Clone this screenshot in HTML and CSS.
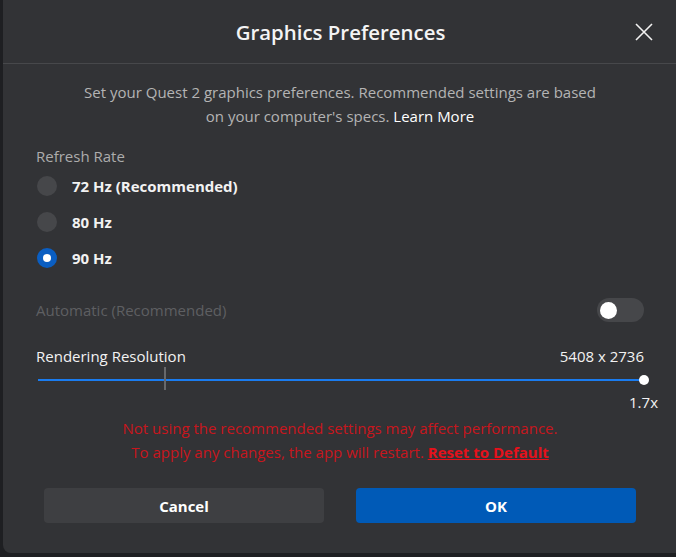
FILE: index.html
```html
<!DOCTYPE html>
<html>
<head>
<meta charset="utf-8">
<link rel="stylesheet" href="styles.css">
</head>
<body>
<div class="dialog">
  <div class="header">
    <div></div>
    <div class="title">Graphics Preferences</div>
    <div class="close">
      <svg width="18" height="18" viewBox="0 0 18 18"><path d="M1 1 L17 17 M17 1 L1 17" stroke="#f2f2f2" stroke-width="1.6" fill="none"/></svg>
    </div>
  </div>
  <div class="content">
    <p class="desc">Set your Quest 2 graphics preferences. Recommended settings are based<br>on your computer's specs. <span class="link">Learn More</span></p>
    <div class="section-label">Refresh Rate</div>
    <div class="radios">
      <div class="radio-row"><span class="radio"></span><span class="radio-label">72 Hz (Recommended)</span></div>
      <div class="radio-row"><span class="radio"></span><span class="radio-label">80 Hz</span></div>
      <div class="radio-row"><span class="radio checked"><span class="dot"></span></span><span class="radio-label">90 Hz</span></div>
    </div>
    <div class="auto-row">
      <span class="auto-label">Automatic (Recommended)</span>
      <span class="toggle"><span class="knob"></span></span>
    </div>
    <div class="res-row">
      <span>Rendering Resolution</span>
      <span>5408 x 2736</span>
    </div>
    <div class="slider">
      <div class="track"></div>
      <div class="tick"></div>
      <div class="thumb"></div>
    </div>
    <div class="scale">1.7x</div>
    <p class="warn">Not using the recommended settings may affect performance.<br>To apply any changes, the app will restart. <a class="reset">Reset to Default</a></p>
    <div class="buttons">
      <button class="btn cancel">Cancel</button>
      <button class="btn ok">OK</button>
    </div>
  </div>
</div>
</body>
</html>
```
FILE: styles.css
```css
html, body {
  margin: 0;
  padding: 0;
  background: #1e1f22;
  width: 676px;
  height: 557px;
  overflow: hidden;
  font-family: "Open Sans", "Noto Sans", sans-serif;
}
.dialog {
  margin-left: 3px;
  width: 673px;
  height: 553px;
  background: #323336;
  border-bottom-left-radius: 8px;
  color: #fff;
}
.header {
  height: 63px;
  border-bottom: 1px solid #47484b;
  display: grid;
  grid-template-columns: 1fr auto 1fr;
  align-items: center;
}
.title {
  font-size: 20.4px;
  font-weight: 600;
  color: #f4f4f4;
  padding-left: 2px;
}
.close {
  justify-self: end;
  padding-right: 23px;
  display: flex;
}
.content {
  padding: 0 32px 0 33px;
}
.desc {
  margin: 16px 0 0;
  text-align: center;
  font-size: 15px;
  line-height: 24px;
  color: #b4b4b4;
}
.link { color: #fff; }
.section-label {
  margin-top: 18px;
  font-size: 15px;
  line-height: 20px;
  color: #acacac;
}
.radios {
  margin-top: 2px;
}
.radio-row {
  height: 36px;
  display: flex;
  align-items: center;
}
.radio {
  width: 20px;
  height: 20px;
  border-radius: 50%;
  background: #46474a;
  margin-left: 1px;
  display: flex;
  align-items: center;
  justify-content: center;
}
.radio.checked { background: #0a5ec2; }
.dot {
  width: 8px;
  height: 8px;
  border-radius: 50%;
  background: #fff;
}
.radio-label {
  margin-left: 15px;
  font-size: 15px;
  font-weight: 700;
  color: #f2f2f2;
}
.auto-row {
  margin-top: 22px;
  height: 24px;
  display: flex;
  align-items: center;
  justify-content: space-between;
}
.auto-label {
  font-size: 15px;
  color: #5e5f62;
}
.toggle {
  width: 47px;
  height: 24px;
  border-radius: 12px;
  background: #46474a;
  display: flex;
  align-items: center;
  padding-left: 3px;
  box-sizing: border-box;
}
.knob {
  width: 17px;
  height: 17px;
  border-radius: 50%;
  background: #fff;
}
.res-row {
  margin-top: 24px;
  height: 20px;
  display: flex;
  justify-content: space-between;
  align-items: center;
  font-size: 15px;
  color: #f2f2f2;
}
.slider {
  position: relative;
  height: 24px;
  margin-top: 2px;
}
.track {
  position: absolute;
  left: 2px;
  right: 0;
  top: 11px;
  height: 2px;
  background: #1a7cf0;
}
.tick {
  position: absolute;
  left: 128px;
  top: -1px;
  width: 2px;
  height: 23px;
  background: #67686b;
}
.thumb {
  position: absolute;
  right: -5px;
  top: 7px;
  width: 10px;
  height: 10px;
  border-radius: 50%;
  background: #fff;
}
.scale {
  text-align: right;
  margin-right: -14px;
  font-size: 15px;
  line-height: 20px;
  color: #f2f2f2;
}
.warn {
  margin: 4px 0 0;
  text-align: center;
  font-size: 15px;
  line-height: 24px;
  color: #c8161d;
}
.reset {
  color: #e5111b;
  font-weight: 700;
  text-decoration: underline;
}
.buttons {
  margin-top: 24px;
  display: flex;
  gap: 32px;
  padding: 0 8px 0 8px;
}
.btn {
  flex: 1;
  height: 35px;
  border: none;
  border-radius: 4px;
  font-family: inherit;
  font-size: 15px;
  font-weight: 700;
  color: #fff;
}
.cancel { background: #3e3f42; }
.ok { background: #005ab7; }
```
